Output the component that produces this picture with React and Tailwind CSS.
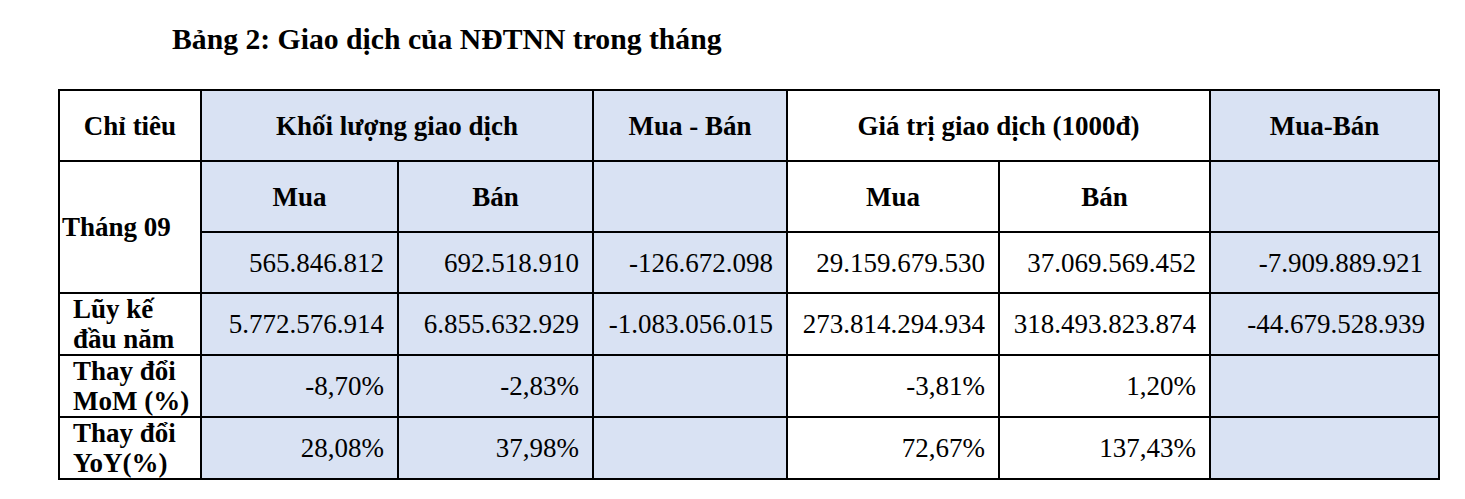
import React from 'react';

const blue = 'bg-[#d9e2f3]';
const cell = 'border-2 border-black align-middle';

const rows = [
  {
    label: ['Lũy kế', 'đầu năm'],
    values: ['5.772.576.914', '6.855.632.929', '-1.083.056.015', '273.814.294.934', '318.493.823.874', '-44.679.528.939'],
  },
  {
    label: ['Thay đổi', 'MoM (%)'],
    values: ['-8,70%', '-2,83%', '', '-3,81%', '1,20%', ''],
  },
  {
    label: ['Thay đổi', 'YoY(%)'],
    values: ['28,08%', '37,98%', '', '72,67%', '137,43%', ''],
  },
];

const shaded = [true, true, true, false, false, true];

export default function App() {
  return (
    <div className="w-[1465px] h-[499px] bg-white text-black font-['Liberation_Serif','Times_New_Roman',serif]">
      <h1 className="pl-[172px] pt-[22px] text-[29.7px] leading-[34px] font-bold">
        Bảng 2: Giao dịch của NĐTNN trong tháng
      </h1>

      <table className="ml-[58px] mt-[33px] w-[1382px] table-fixed border-collapse border-2 border-black text-[27px] leading-[30px]">
        <colgroup>
          <col className="w-[142px]" />
          <col className="w-[197px]" />
          <col className="w-[195px]" />
          <col className="w-[194px]" />
          <col className="w-[212px]" />
          <col className="w-[211px]" />
          <col className="w-[229px]" />
        </colgroup>
        <tbody>
          <tr className="h-[71px] font-bold text-center">
            <td className={cell}>Chỉ tiêu</td>
            <td colSpan={2} className={`${cell} ${blue}`}>Khối lượng giao dịch</td>
            <td className={`${cell} ${blue}`}>Mua - Bán</td>
            <td colSpan={2} className={cell}>Giá trị giao dịch (1000đ)</td>
            <td className={`${cell} ${blue}`}>Mua-Bán</td>
          </tr>
          <tr className="h-[71px] font-bold text-center">
            <td rowSpan={2} className={`${cell} text-left pl-[2px]`}>Tháng 09</td>
            <td className={`${cell} ${blue}`}>Mua</td>
            <td className={`${cell} ${blue}`}>Bán</td>
            <td className={`${cell} ${blue}`}></td>
            <td className={cell}>Mua</td>
            <td className={cell}>Bán</td>
            <td className={`${cell} ${blue}`}></td>
          </tr>
          <tr className="h-[61px] text-right">
            <td className={`${cell} ${blue} pr-[13px]`}>565.846.812</td>
            <td className={`${cell} ${blue} pr-[13px]`}>692.518.910</td>
            <td className={`${cell} ${blue} pr-[13px]`}>-126.672.098</td>
            <td className={`${cell} pr-[13px]`}>29.159.679.530</td>
            <td className={`${cell} pr-[13px]`}>37.069.569.452</td>
            <td className={`${cell} ${blue} pr-[15px]`}>-7.909.889.921</td>
          </tr>
          {rows.map((row, i) => (
            <tr key={i} className="h-[61px] text-right">
              <td className={`${cell} text-left font-bold pl-[13px]`}>
                {row.label[0]}
                <br />
                {row.label[1]}
              </td>
              {row.values.map((v, j) => (
                <td key={j} className={`${cell} ${shaded[j] ? blue : ''} pr-[13px]`}>
                  {v}
                </td>
              ))}
            </tr>
          ))}
        </tbody>
      </table>
    </div>
  );
}
